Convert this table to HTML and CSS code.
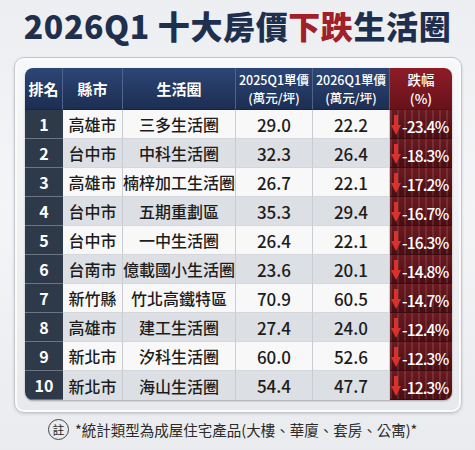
FILE: index.html
```html
<!DOCTYPE html>
<html lang="zh-Hant">
<head>
    <meta charset="UTF-8">
    <meta name="viewport" content="width=device-width, initial-scale=1.0">
    <title>2026Q1 十大房價下跌生活圈</title>
    <link rel="stylesheet" href="styles.css">
</head>
<body>
    <h1 class="title">2026Q1 十大房價<span class="red">下跌</span>生活圈</h1>

    <div class="frame">
        <table class="ranking">
            <colgroup>
                <col class="c-rank">
                <col class="c-city">
                <col class="c-area">
                <col class="c-price">
                <col class="c-price2">
                <col class="c-drop">
            </colgroup>
            <thead>
                <tr>
                    <th>排名</th>
                    <th>縣市</th>
                    <th>生活圈</th>
                    <th class="small">2025Q1單價<br>(萬元/坪)</th>
                    <th class="small">2026Q1單價<br>(萬元/坪)</th>
                    <th class="drop-head">跌幅<br>(%)</th>
                </tr>
            </thead>
            <tbody id="rows"></tbody>
        </table>
    </div>

    <p class="note"><span class="note-mark">註</span>*統計類型為成屋住宅產品(大樓、華廈、套房、公寓)*</p>

    <script>
        // rank, city, area, 2025 price, 2026 price, change
        const data = [
            ['1', '高雄市', '三多生活圈', '29.0', '22.2', '-23.4%'],
            ['2', '台中市', '中科生活圈', '32.3', '26.4', '-18.3%'],
            ['3', '高雄市', '楠梓加工生活圈', '26.7', '22.1', '-17.2%'],
            ['4', '台中市', '五期重劃區', '35.3', '29.4', '-16.7%'],
            ['5', '台中市', '一中生活圈', '26.4', '22.1', '-16.3%'],
            ['6', '台南市', '億載國小生活圈', '23.6', '20.1', '-14.8%'],
            ['7', '新竹縣', '竹北高鐵特區', '70.9', '60.5', '-14.7%'],
            ['8', '高雄市', '建工生活圈', '27.4', '24.0', '-12.4%'],
            ['9', '新北市', '汐科生活圈', '60.0', '52.6', '-12.3%'],
            ['10', '新北市', '海山生活圈', '54.4', '47.7', '-12.3%']
        ];

        const arrow = '<svg class="arrow" viewBox="0 0 10 20" width="10" height="20">' +
            '<rect x="3" y="0" width="4" height="12" fill="#d8322a"/>' +
            '<polygon points="0,10 10,10 5,20" fill="#d8322a"/></svg>';

        const tbody = document.getElementById('rows');
        data.forEach(function(r) {
            const tr = document.createElement('tr');
            tr.innerHTML = `
                <td class="rank">${r[0]}</td>
                <td>${r[1]}</td>
                <td>${r[2]}</td>
                <td class="num">${r[3]}</td>
                <td class="num">${r[4]}</td>
                <td class="drop">${arrow}<span>${r[5]}</span></td>
            `;
            tbody.appendChild(tr);
        });
    </script>
</body>
</html>
```

FILE: styles.css
```css
body {
    margin: 0;
    width: 475px;
    height: 450px;
    overflow: hidden;
    font-family: "Noto Sans CJK TC", "Noto Sans", sans-serif;
    background: linear-gradient(180deg, #eceef1 0%, #f4f5f7 45%, #e9ebee 100%);
    color: #222;
}
.title {
    margin: 0;
    padding-top: 3px;
    height: 50px;
    text-align: center;
    font-size: 32px;
    font-weight: 900;
    color: #1f2f4e;
    letter-spacing: 0.6px;
    line-height: 44px;
}
.title .red {
    color: #a11f29;
}
.frame {
    margin: 4px 13px 0 14px;
    padding: 10px 9px 12px 10px;
    border: 1px solid #c4c8ce;
    border-radius: 10px;
    background: linear-gradient(180deg, #f7f8fa, #e7e9ec);
    box-shadow: inset 0 0 0 2px #fbfbfc, 0 1px 3px rgba(0, 0, 0, 0.15);
}
.ranking {
    width: 427px;
    border-collapse: separate;
    border-spacing: 0;
    table-layout: fixed;
    border-radius: 8px;
    overflow: hidden;
    box-shadow: 0 1px 2px rgba(0, 0, 0, 0.3);
}
.c-rank { width: 38px; }
.c-city { width: 60px; }
.c-area { width: 113px; }
.c-price { width: 77px; }
.c-price2 { width: 77px; }
.c-drop { width: 62px; }
th {
    height: 41px;
    padding: 0;
    color: #fff;
    font-size: 15px;
    font-weight: 700;
    line-height: 18px;
    background: linear-gradient(180deg, #2d4676 0%, #1c2e52 100%);
    border-right: 1px solid #50648a;
    border-bottom: 1px solid #1a2440;
}
th.small {
    font-size: 12.5px;
    line-height: 18px;
    font-weight: 500;
}
th.drop-head {
    font-size: 13.5px;
    line-height: 19px;
    font-weight: 500;
    border-right: none;
    background: linear-gradient(180deg, #8d1d27 0%, #681219 100%);
}
td {
    height: 28px;
    padding: 0;
    text-align: center;
    font-size: 16px;
    font-weight: 500;
    color: #1c1c1c;
    white-space: nowrap;
    border-right: 1px solid #c9ccd2;
    border-bottom: 1px solid #d4d7dc;
}
tbody tr:nth-child(odd) td {
    background: #f8f8f9;
}
tbody tr:nth-child(even) td {
    background: #dcdfe4;
}
tbody tr:last-child td {
    border-bottom: none;
}
tbody tr td.rank {
    background: #2e3949;
    color: #fff;
    font-weight: 700;
    font-size: 16px;
    border-bottom: 1px solid #6b7584;
    border-right: none;
}
td.num {
    font-size: 17px;
}
tbody tr td.drop {
    border-right: none;
    border-bottom: 1px solid #3c0c10;
    color: #fff;
    font-size: 15.5px;
    text-align: left;
    overflow: hidden;
    background:
        repeating-linear-gradient(90deg, rgba(255, 255, 255, 0.10) 0 2px, transparent 2px 7px),
        linear-gradient(180deg, #6b1a20 0%, #4a0d12 100%);
}
.drop .arrow {
    vertical-align: middle;
    margin: 0 1px 0 1px;
}
.drop span {
    vertical-align: middle;
    letter-spacing: -0.8px;
}
.note {
    margin: 6px 0 0;
    padding-left: 48px;
    font-size: 14.5px;
    color: #2b2b2b;
    line-height: 22px;
}
.note-mark {
    display: inline-block;
    width: 19px;
    height: 19px;
    margin-right: 6px;
    border: 1.5px solid #444;
    border-radius: 50%;
    font-size: 12px;
    line-height: 19px;
    text-align: center;
    vertical-align: 1px;
}
```
